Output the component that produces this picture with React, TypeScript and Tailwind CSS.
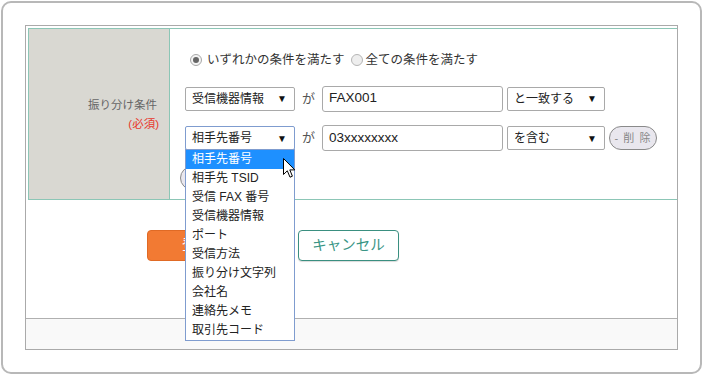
import React from "react";

const FONT = '"Liberation Sans", "Noto Sans CJK JP", sans-serif';

function Select({ label, width, focused }: { label: string; width: number; focused?: boolean }) {
  return (
    <div
      className={`flex items-center justify-between h-[24px] bg-white border rounded-[2px] pl-[6px] pr-[7px] text-[12px] text-[#222] ${
        focused ? "border-[#7f9ccf]" : "border-[#a9a9a9]"
      }`}
      style={{ width }}
    >
      <span>{label}</span>
      <span className="text-[10px] text-[#111]">▼</span>
    </div>
  );
}

function Input({ value }: { value: string }) {
  return (
    <div className="flex items-center w-[181px] h-[26px] border border-[#a9a9a9] rounded-[3px] pl-[6px] text-[13.5px] text-[#222] bg-white">
      {value}
    </div>
  );
}

const items = [
  "相手先番号",
  "相手先 TSID",
  "受信 FAX 番号",
  "受信機器情報",
  "ポート",
  "受信方法",
  "振り分け文字列",
  "会社名",
  "連絡先メモ",
  "取引先コード",
];

export default function App() {
  return (
    <div className="w-[703px] h-[375px] bg-white p-px" style={{ fontFamily: FONT }}>
      <div className="w-[701px] h-[373px] border-2 border-[#b8b8b8] rounded-[10px] pt-[22px] pl-[22px]">
        <div className="w-[653px] h-[325px] border border-[#aaaaaa] flex flex-col">
          {/* table */}
          <div className="pl-[2px] pt-[2px]">
            <div className="flex h-[172px] border-t border-l border-b border-[#8cc6b6]">
              <div className="w-[141px] bg-[#d9d8d2] border-r border-[#8cc6b6] flex flex-col items-end justify-center pr-[12px] pt-[2px]">
                <div className="text-[11.5px] text-[#666] leading-[19px]">振り分け条件</div>
                <div className="text-[11.5px] text-[#e8372c] leading-[19px] mr-[-2px]">(必須)</div>
              </div>
              <div className="flex-1 flex flex-col pl-[15px] pt-[21px]">
                {/* radios */}
                <div className="flex items-center h-[20px] text-[12.5px] text-[#333]">
                  <span className="w-[12px] h-[12px] rounded-full border border-[#a8a8a8] bg-[#f4f4f4] flex items-center justify-center ml-[5px] mr-[5px]">
                    <span className="w-[6px] h-[6px] rounded-full bg-[#666]" />
                  </span>
                  <span>いずれかの条件を満たす</span>
                  <span className="w-[12px] h-[12px] rounded-full border border-[#b5b5b5] bg-[#eeeeee] ml-[6px] mr-[3px]" />
                  <span>全ての条件を満たす</span>
                </div>
                {/* row 1 */}
                <div className="flex items-center mt-[16px] h-[25px]">
                  <Select label="受信機器情報" width={110} />
                  <span className="w-[27px] text-center text-[13px] text-[#555]">が</span>
                  <Input value="FAX001" />
                  <div className="ml-[4px]">
                    <Select label="と一致する" width={98} />
                  </div>
                </div>
                {/* row 2 */}
                <div className="flex items-center mt-[14px] h-[26px]">
                  <div className="relative z-10">
                    <Select label="相手先番号" width={110} focused />
                    <div className="absolute left-0 top-[23px] w-[110px] bg-white border border-[#7f9ccf] text-[12px] text-[#222]">
                      {items.map((it, i) => (
                        <div
                          key={it}
                          className={`h-[19px] leading-[19px] pl-[6px] ${i === 0 ? "bg-[#1e90ff] text-white" : ""}`}
                        >
                          {it}
                        </div>
                      ))}
                    </div>
                    <svg
                      className="absolute left-[98px] top-[32px]"
                      width="14"
                      height="21"
                      viewBox="0 0 14 21"
                    >
                      <path
                        d="M0.5 0.5 L0.5 16.5 L4.3 12.8 L7 19.2 L9.4 18.2 L6.8 11.9 L11.8 11.9 Z"
                        fill="white"
                        stroke="black"
                        strokeWidth="1"
                        strokeLinejoin="round"
                      />
                    </svg>
                  </div>
                  <span className="w-[27px] text-center text-[13px] text-[#555]">が</span>
                  <Input value="03xxxxxxxx" />
                  <div className="ml-[4px]">
                    <Select label="を含む" width={98} />
                  </div>
                  <div className="ml-[4px] w-[48px] h-[24px] rounded-full border border-[#8a8a8a] bg-[#e9e7ee] flex items-center justify-center text-[11px] text-[#888] tracking-[1px]">
                    - 削 除
                  </div>
                </div>
                {/* add row (covered by the open list) */}
                <div className="flex items-center mt-[15px] h-[24px] ml-[-5px]">
                  <div className="w-[48px] h-[24px] rounded-full border border-[#8a8a8a] bg-[#e9e7ee]" />
                </div>
              </div>
            </div>
          </div>
          {/* buttons */}
          <div className="flex-1 flex items-start pt-[30px] pl-[121px] gap-[51px]">
            <div className="w-[100px] h-[31px] rounded-[4px] bg-[#f27a33] border border-[#e06a25] flex items-center justify-center text-white text-[15px]">
              登録
            </div>
            <div className="w-[101px] h-[31px] rounded-[4px] bg-white border border-[#3a8f80] flex items-center justify-center text-[#3a9585] text-[14.5px] shadow-[0_1px_1px_rgba(0,0,0,0.15)]">
              キャンセル
            </div>
          </div>
          {/* footer */}
          <div className="h-[31px] border-t border-[#b0b0b0] bg-[#f9f9f9]" />
        </div>
      </div>
    </div>
  );
}
